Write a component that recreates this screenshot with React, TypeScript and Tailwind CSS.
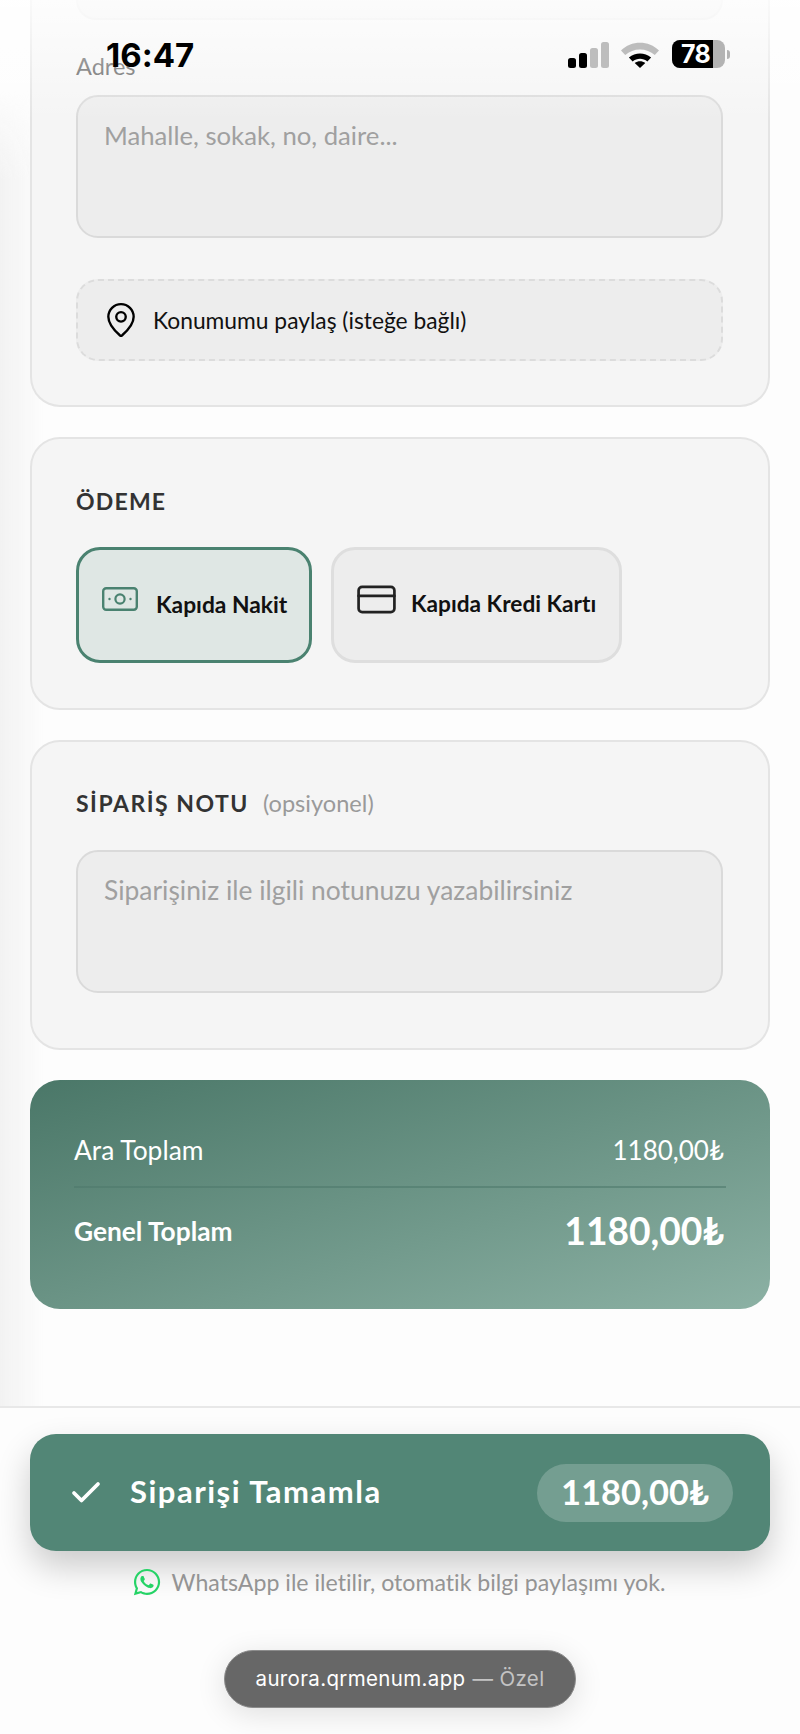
import { Check, CreditCard, MapPin } from "lucide-react";
import { FaWhatsapp } from "react-icons/fa";

const lato = "font-['Lato','Noto_Sans',sans-serif]";
const sfLike = "font-['Inter','Liberation_Sans',sans-serif]";

function StatusBar() {
  return (
    <div className={`absolute inset-x-0 top-0 z-20 h-[120px] bg-gradient-to-b from-white/80 to-white/0 ${sfLike}`}>
      <div className="absolute left-[106px] top-[34px] text-[33px] leading-[42px] font-bold text-black">16:47</div>
      <div className="absolute left-[567px] top-[40px] flex items-start gap-[12px]">
        <svg width="42" height="28" viewBox="0 0 42 28" className="mt-px">
          <rect x="1" y="17" width="8" height="10" rx="2.5" fill="#000" />
          <rect x="12" y="12" width="8" height="15" rx="2.5" fill="#000" />
          <rect x="23" y="7" width="8" height="20" rx="2.5" fill="#bdbdbd" />
          <rect x="34" y="1" width="8" height="26" rx="2.5" fill="#bdbdbd" />
        </svg>
        <svg width="38" height="28" viewBox="0 0 36 28" preserveAspectRatio="none">
          <path d="M0 10.500C9.500 0 26.500 0 36 10.500L32 15C24.500 7.500 11.500 7.500 4 15Z" fill="#bdbdbd" />
          <path d="M7.500 17.500C13.500 12 22.500 12 28.500 17.500L25 21.500C21 17.800 15 17.800 11 21.500Z" fill="#000" />
          <path d="M13 23C16 20.500 20 20.500 23 23L18 28Z" fill="#000" />
        </svg>
        <div className="ml-px flex items-center">
          <div className="flex h-[28px] w-[53px] overflow-hidden rounded-[8px] bg-[#b3b3b3]">
            <div className="flex h-full w-[41px] items-center justify-center bg-black pl-[6px] text-[25px] leading-none font-bold tracking-tight text-white">78</div>
          </div>
          <div className="ml-[2px] h-[9px] w-[3px] rounded-r-full bg-[#b3b3b3]" />
        </div>
      </div>
    </div>
  );
}

function CashIcon() {
  return (
    <svg width="36" height="24" viewBox="0 0 36 24" fill="none" className="-mt-[12px] shrink-0" stroke="#4a8270">
      <rect x="1.200" y="1.200" width="33.600" height="21.600" rx="3" strokeWidth="2.400" />
      <circle cx="18" cy="12" r="4.600" strokeWidth="2.200" />
      <circle cx="7.500" cy="12" r="1.200" fill="#4a8270" stroke="none" />
      <circle cx="28.500" cy="12" r="1.200" fill="#4a8270" stroke="none" />
    </svg>
  );
}

export default function App() {
  return (
    <div className={`relative flex h-[1734px] w-[800px] flex-col overflow-hidden bg-[#fdfdfd] [font-variant-ligatures:none] ${lato}`}>
      <StatusBar />
      <div className="pointer-events-none absolute left-0 top-[90px] h-[1316px] w-[44px] bg-gradient-to-r from-[#f2f2f2] to-[#fdfdfd]/0 [mask-image:linear-gradient(to_bottom,transparent,black_90px)]" />

      <main className="relative flex flex-1 flex-col gap-[30px] overflow-hidden px-[30px]">
        <section className="h-[407px] shrink-0 rounded-b-[30px] border-2 border-t-0 border-[#e4e4e4] bg-[#f5f5f5] pl-[44px] pr-[45px]">
          <div className="h-[20px] rounded-b-[22px] border-2 border-t-0 border-[#e6e6e6] bg-[#eeeeee]" />
          <label className="mt-[32px] block text-[23.500px] leading-[28px] text-[#555]">Adres</label>
          <div className="mt-[15px] h-[143px] rounded-[22px] border-2 border-[#dadada] bg-[#ededed] px-[26px] py-[22px] text-[25.700px] leading-[32px] text-[#a0a0a0]">
            Mahalle, sokak, no, daire...
          </div>
          <div className="mt-[41px] flex h-[82px] items-center gap-[13px] rounded-[22px] border-2 border-dashed border-[#dcdcdc] bg-[#ededed] px-[24px] text-[22.800px] text-[#111]">
            <MapPin size={38} strokeWidth={1.5} className="text-black" />
            Konumumu paylaş (isteğe bağlı)
          </div>
        </section>

        <section className="h-[273px] shrink-0 rounded-[30px] border-2 border-[#e4e4e4] bg-[#f5f5f5] pl-[44px] pr-[45px] pt-[47px]">
          <h2 className="text-[23px] leading-[30px] font-bold tracking-[1.200px] text-[#333]">ÖDEME</h2>
          <div className="mt-[31px] flex gap-[19px]">
            <div className="flex h-[116px] w-[236px] items-center gap-[18px] rounded-[24px] border-[3px] border-[#4a8270] bg-[#dfe7e4] pl-[23px]">
              <CashIcon />
              <span className="pb-[2px] text-[22.800px] font-bold text-[#111]">Kapıda Nakit</span>
            </div>
            <div className="flex h-[116px] w-[291px] items-center gap-[18px] rounded-[24px] border-[3px] border-[#dedede] bg-[#ededed] pl-[23px]">
              <CreditCard size={43} strokeWidth={1.5} className="-ml-[2px] -mr-[5px] -mt-[12px] shrink-0 text-[#222]" />
              <span className="pb-[2px] text-[22.700px] font-bold text-[#111]">Kapıda Kredi Kartı</span>
            </div>
          </div>
        </section>

        <section className="h-[310px] shrink-0 rounded-[30px] border-2 border-[#e4e4e4] bg-[#f5f5f5] pl-[44px] pr-[45px] pt-[44px]">
          <div className="flex items-baseline gap-[14px]">
            <h2 className="text-[23px] leading-[30px] font-bold tracking-[1.500px] text-[#333]">SİPARİŞ NOTU</h2>
            <span className="text-[23.600px] text-[#9a9a9a]">(opsiyonel)</span>
          </div>
          <div className="mt-[29px] h-[143px] rounded-[22px] border-2 border-[#dadada] bg-[#ededed] px-[26px] py-[22px] text-[26.400px] leading-[32px] text-[#a0a0a0]">
            Siparişiniz ile ilgili notunuzu yazabilirsiniz
          </div>
        </section>

        <section className="h-[229px] shrink-0 rounded-[30px] bg-gradient-to-br from-[#4a7768] to-[#8cb1a4] px-[44px] pt-[50px] text-white">
          <div className="flex items-center justify-between text-[26.400px] leading-[40px]">
            <span>Ara Toplam</span>
            <span className="pr-[2px] text-[26px]">1180,00₺</span>
          </div>
          <div className="mt-[16px] h-[2px] bg-[#4f7a6c]/60" />
          <div className="mt-[14px] flex h-[60px] items-center justify-between">
            <span className="text-[26.300px] font-bold">Genel Toplam</span>
            <span className="pr-[2px] pb-[3px] text-[37.200px] font-bold">1180,00₺</span>
          </div>
        </section>
      </main>

      <footer className="relative h-[328px] shrink-0 border-t-2 border-[#e8e8e8] bg-[#fdfdfd] px-[30px] pt-[26px]">
        <button className="flex h-[117px] w-full items-center rounded-[26px] bg-[#528676] pl-[38px] pr-[37px] text-white shadow-[0_16px_34px_rgba(0,0,0,0.2)]">
          <Check size={36} strokeWidth={2.5} />
          <span className="ml-[26px] pb-[2px] text-[31px] font-bold tracking-[1.500px]">Siparişi Tamamla</span>
          <span className="ml-auto flex h-[58px] w-[196px] items-center justify-center rounded-full bg-white/20 pb-[2px] text-[34.500px] font-bold">1180,00₺</span>
        </button>
        <div className="mt-[14px] flex items-center justify-center gap-[10px] pr-[3px] text-[23.150px] text-[#949494]">
          <FaWhatsapp size={30} className="text-[#25d366]" />
          WhatsApp ile iletilir, otomatik bilgi paylaşımı yok.
        </div>
        <div className={`absolute left-[224px] top-[242px] flex h-[58px] w-[352px] items-center justify-center gap-[7px] rounded-full border border-[#8c8c8c] bg-[#676767] text-[20.500px] tracking-[0.35px] shadow-[0_6px_30px_rgba(0,0,0,0.12)] ${sfLike}`}>
          <span className="text-white">aurora.qrmenum.app</span>
          <span className="text-[#c4c4c4]">— Özel</span>
        </div>
      </footer>
    </div>
  );
}
